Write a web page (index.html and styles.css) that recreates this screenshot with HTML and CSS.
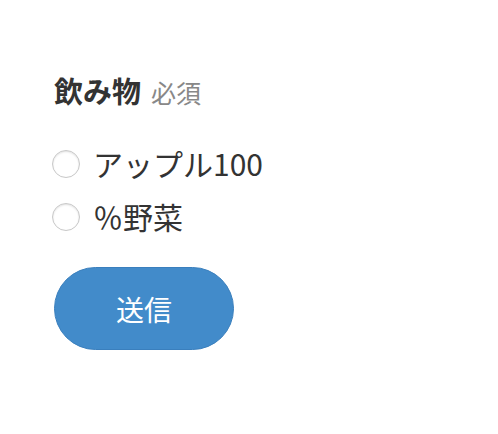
FILE: index.html
```html
<!DOCTYPE html>
<html lang="ja">
<head>
<meta charset="utf-8">
<link rel="stylesheet" href="styles.css">
</head>
<body>
<form class="form">
  <div class="label-row">
    <span class="label">飲み物</span>
    <span class="required">必須</span>
  </div>
  <div class="options">
    <label class="option"><span class="radio"></span><span class="option-text">アップル100</span></label>
    <label class="option"><span class="radio"></span><span class="option-text">％野菜</span></label>
  </div>
  <button type="button" class="submit">送信</button>
</form>
</body>
</html>
```
FILE: styles.css
```css
html, body {
  margin: 0;
  padding: 0;
  background: #fff;
}
body {
  font-family: "Noto Sans CJK JP", "Noto Sans", sans-serif;
  color: #333;
}
.form {
  padding: 70px 0 0 54px;
  display: flex;
  flex-direction: column;
  align-items: flex-start;
}
.label-row {
  display: flex;
  align-items: baseline;
  gap: 10px;
  line-height: 40px;
}
.label {
  font-size: 29px;
  font-weight: bold;
  color: #333;
}
.required {
  font-size: 25px;
  color: #888;
}
.options {
  margin-top: 31px;
  display: flex;
  flex-direction: column;
  gap: 12px;
}
.option {
  display: flex;
  align-items: center;
  margin-left: -2px;
  height: 41px;
}
.radio {
  width: 26px;
  height: 26px;
  border-radius: 50%;
  border: 1px solid #c8c8c8;
  box-shadow: inset 0 1px 2px rgba(0,0,0,0.12);
  background: #fff;
  flex: none;
}
.option-text {
  margin-left: 13px;
  font-size: 30px;
  line-height: 41px;
  color: #333;
}
.submit {
  margin-top: 30px;
  width: 180px;
  height: 83px;
  border-radius: 42px;
  border: 1px solid #3a7fbd;
  background: #428bca;
  color: #fff;
  font-family: "Noto Sans CJK JP", sans-serif;
  font-size: 28px;
  padding: 0;
}
```
